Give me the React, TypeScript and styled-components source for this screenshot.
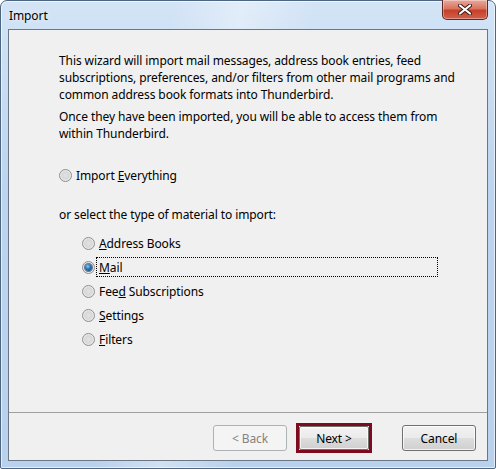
import React from "react"
import styled, { createGlobalStyle, css } from "styled-components"

const GlobalStyle = createGlobalStyle`
  html, body {
    margin: 0;
    padding: 0;
    background: #ffffff;
  }
  body {
    font-family: "Noto Sans", "Liberation Sans", sans-serif;
    font-size: 12px;
    letter-spacing: -0.1px;
    color: #000;
  }
`

const Frame = styled.div`
  box-sizing: border-box;
  width: 496px;
  height: 469px;
  display: flex;
  flex-direction: column;
  padding: 0 7px 7px 7px;
  border: 1px solid #4d6682;
  border-radius: 7px 7px 2px 2px;
  background:
    linear-gradient(100deg, rgba(255, 255, 255, 0) 30%, rgba(255, 255, 255, 0.35) 42%, rgba(255, 255, 255, 0) 55%),
    linear-gradient(to bottom, #d3e4f6 0%, #bcd4ee 40%, #b9d1ec 100%);
  box-shadow: inset 0 0 0 1px rgba(255, 255, 255, 0.6);
`

const TitleBar = styled.div`
  height: 28px;
  display: flex;
  justify-content: space-between;
  align-items: flex-start;
  flex-shrink: 0;
`

const Title = styled.span`
  padding: 7px 0 0 1px;
  font-size: 12px;
  line-height: 16px;
  color: #000;
  text-shadow: 0 0 6px rgba(255, 255, 255, 0.9);
`

const CloseButton = styled.div`
  box-sizing: border-box;
  width: 46px;
  height: 20px;
  margin-top: -1px;
  display: flex;
  align-items: center;
  justify-content: center;
  border: 1px solid #5c2a24;
  border-top: none;
  border-radius: 0 0 5px 5px;
  background: linear-gradient(to bottom, #e9a99c 0%, #d8745f 45%, #c6402a 55%, #d1614b 100%);
  box-shadow: inset 0 0 0 1px rgba(255, 255, 255, 0.35);
`

const Client = styled.div`
  flex: 1;
  display: flex;
  flex-direction: column;
  border: 1px solid #6b7785;
  background: #f0f0f0;
`

const Content = styled.div`
  flex: 1;
  padding: 22px 49px 0 50px;
  display: flex;
  flex-direction: column;
`

const Paragraph = styled.p<{ $gap?: number; $top?: number }>`
  margin: ${(p) => p.$top ?? 0}px 0 ${(p) => p.$gap ?? 0}px 0;
  line-height: 17px;
  white-space: nowrap;
`

const OptionList = styled.div`
  display: flex;
  flex-direction: column;
  gap: 4px;
  padding-left: 23px;
`

const OptionRow = styled.label`
  display: flex;
  align-items: center;
  height: 20px;
`

const Radio = styled.span<{ $checked?: boolean }>`
  box-sizing: border-box;
  width: 13px;
  height: 13px;
  flex-shrink: 0;
  border-radius: 50%;
  border: 1px solid #8c8e90;
  background: radial-gradient(circle at 50% 50%, #e4e4e4 0%, #d7d7d7 45%, #f4f4f4 80%, #ffffff 100%);
  display: flex;
  align-items: center;
  justify-content: center;
  ${(p) =>
    p.$checked &&
    css`
      &::after {
        content: "";
        width: 7px;
        height: 7px;
        border-radius: 50%;
        background: radial-gradient(circle at 40% 35%, #8fcdf5 0%, #2a78b6 40%, #0f3d63 100%);
        box-shadow: 0 0 0 1px rgba(15, 50, 85, 0.6);
      }
    `}
`

const OptionText = styled.span<{ $focused?: boolean; $wide?: boolean }>`
  box-sizing: border-box;
  margin-left: 1px;
  padding: 0 2px;
  height: 20px;
  line-height: 19px;
  border: 1px dotted transparent;
  ${(p) => p.$wide && "flex: 1;"}
  ${(p) => p.$focused && "border-color: #000;"}
`

const Separator = styled.div`
  height: 1px;
  background: #a0a0a0;
  flex-shrink: 0;
`

const ButtonRow = styled.div`
  height: 47px;
  box-sizing: border-box;
  padding: 10px 11px 0 0;
  display: flex;
  align-items: flex-start;
  justify-content: flex-end;
  flex-shrink: 0;
`

const Button = styled.button<{ $disabled?: boolean }>`
  box-sizing: border-box;
  width: 74px;
  height: 26px;
  margin-top: 2px;
  padding: 0;
  font-family: inherit;
  font-size: 12px;
  letter-spacing: inherit;
  color: #000;
  border: 1px solid #707070;
  border-radius: 3px;
  background: linear-gradient(to bottom, #f2f2f2 0%, #ebebeb 48%, #dddddd 52%, #cfcfcf 100%);
  box-shadow: inset 0 0 0 1px rgba(255, 255, 255, 0.75);
  ${(p) =>
    p.$disabled &&
    css`
      color: #838383;
      border-color: #adb2b5;
      background: #f4f4f4;
      box-shadow: none;
    `}
`

const Highlight = styled.div`
  margin: 0 30px 0 9px;
  border: 3px solid #7d0a1f;
  display: flex;
`

const NextButton = styled(Button)`
  width: 70px;
  height: 24px;
  margin-top: 0;
  border-radius: 2px;
`

const CloseGlyph = () => (
  <svg width="14" height="11" viewBox="0 0 14 11">
    <path
      d="M2 1.5 L12 9.5 M12 1.5 L2 9.5"
      stroke="#3b1a16"
      strokeWidth="4"
      strokeLinecap="round"
    />
    <path
      d="M2 1.5 L12 9.5 M12 1.5 L2 9.5"
      stroke="#ffffff"
      strokeWidth="2.2"
      strokeLinecap="round"
    />
  </svg>
)

const options = [
  { key: "A", rest: "ddress Books", before: "" },
  { key: "M", rest: "ail", before: "", checked: true },
  { key: "d", rest: " Subscriptions", before: "Fee" },
  { key: "S", rest: "ettings", before: "" },
  { key: "F", rest: "ilters", before: "" },
]

const App: React.FC = () => {
  return (
    <>
      <GlobalStyle />
      <Frame>
        <TitleBar>
          <Title>Import</Title>
          <CloseButton>
            <CloseGlyph />
          </CloseButton>
        </TitleBar>
        <Client>
          <Content>
            <Paragraph $gap={5}>
              This wizard will import mail messages, address book entries, feed
              <br />
              subscriptions, preferences, and/or filters from other mail programs and
              <br />
              common address book formats into Thunderbird.
            </Paragraph>
            <Paragraph $gap={23}>
              Once they have been imported, you will be able to access them from
              <br />
              within Thunderbird.
            </Paragraph>
            <OptionRow>
              <Radio />
              <OptionText>
                Import <u>E</u>verything
              </OptionText>
            </OptionRow>
            <Paragraph $top={21} $gap={10}>
              or select the type of material to import:
            </Paragraph>
            <OptionList>
              {options.map((o) => (
                <OptionRow key={o.key}>
                  <Radio $checked={o.checked} />
                  <OptionText $focused={o.checked} $wide={o.checked}>
                    {o.before}
                    <u>{o.key}</u>
                    {o.rest}
                  </OptionText>
                </OptionRow>
              ))}
            </OptionList>
          </Content>
          <Separator />
          <ButtonRow>
            <Button $disabled>&lt; Back</Button>
            <Highlight>
              <NextButton>Next &gt;</NextButton>
            </Highlight>
            <Button>Cancel</Button>
          </ButtonRow>
        </Client>
      </Frame>
    </>
  )
}

export default App
